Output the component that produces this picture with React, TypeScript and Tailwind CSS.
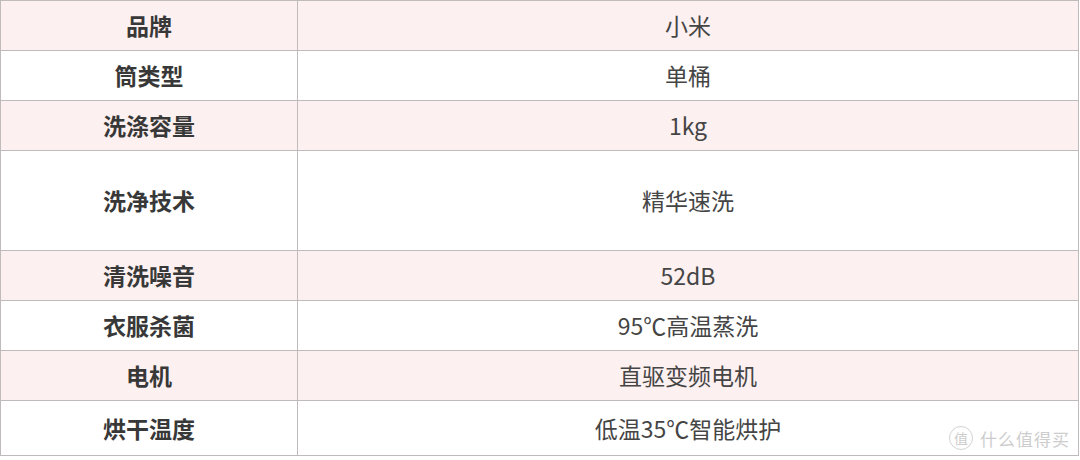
const rows = [
  { label: "品牌", value: "小米", h: "h-[50px]", pink: true },
  { label: "筒类型", value: "单桶", h: "h-[50px]", pink: false },
  { label: "洗涤容量", value: "1kg", h: "h-[50px]", pink: true },
  { label: "洗净技术", value: "精华速洗", h: "h-[100px]", pink: false },
  { label: "清洗噪音", value: "52dB", h: "h-[50px]", pink: true },
  { label: "衣服杀菌", value: "95℃高温蒸洗", h: "h-[50px]", pink: false },
  { label: "电机", value: "直驱变频电机", h: "h-[50px]", pink: true },
  { label: "烘干温度", value: "低温35℃智能烘护", h: "h-[55px]", pink: false },
]

export default function App() {
  return (
    <div
      className="relative w-[1080px] h-[460px] bg-white overflow-hidden"
      style={{ fontFamily: '"Noto Sans CJK SC", "Noto Sans", sans-serif' }}
    >
      <div className="w-[1079px] border-t border-l border-[#bfbbbb]">
        {rows.map((row) => (
          <div
            key={row.label}
            className={`grid grid-cols-[297px_1fr] ${row.h} ${row.pink ? "bg-[#fdf0f0]" : "bg-white"}`}
          >
            <div className="flex items-center justify-center border-r border-b border-[#bfbbbb] text-[23px] font-semibold text-[#383838]">
              {row.label}
            </div>
            <div className="flex items-center justify-center border-r border-b border-[#bfbbbb] text-[23px] text-[#454545]">
              {row.value}
            </div>
          </div>
        ))}
      </div>

      {/* watermark */}
      <div className="absolute right-[10px] bottom-[9px] flex items-center gap-[7px] text-[#cdcdcd]">
        <div className="flex h-[24px] w-[24px] items-center justify-center rounded-full border border-[#d2d2d2] text-[14px]">
          值
        </div>
        <span className="text-[17px] tracking-[1px]">什么值得买</span>
      </div>
    </div>
  )
}
